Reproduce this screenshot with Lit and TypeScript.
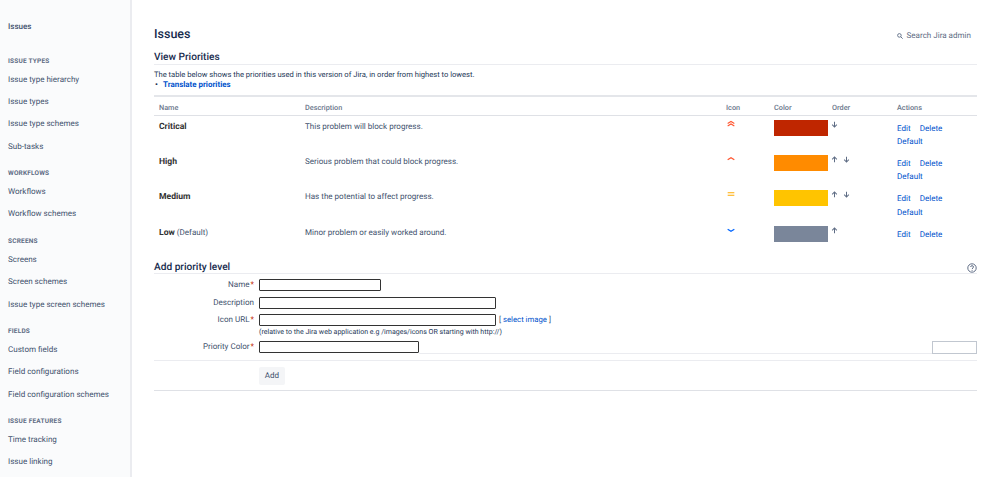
import { LitElement, html, css, svg } from "lit";
import { customElement } from "lit/decorators.js";

const NAV = [
  { t: "ISSUE TYPES", items: ["Issue type hierarchy", "Issue types", "Issue type schemes", "Sub-tasks"] },
  { t: "WORKFLOWS", items: ["Workflows", "Workflow schemes"] },
  { t: "SCREENS", items: ["Screens", "Screen schemes", "Issue type screen schemes"] },
  { t: "FIELDS", items: ["Custom fields", "Field configurations", "Field configuration schemes"] },
  { t: "ISSUE FEATURES", items: ["Time tracking", "Issue linking"] },
];

const ICONS: Record<string, unknown> = {
  critical: svg`<path d="M2 5.5 6 3l4 2.500M2 8.500 6 6l4 2.500" stroke="#ff5630" stroke-width="1.300" fill="none"/>`,
  high: svg`<path d="M2 7 6 4.500 10 7" stroke="#ff5630" stroke-width="1.500" fill="none"/>`,
  medium: svg`<path d="M2 4.500h8M2 7.500h8" stroke="#ffab00" stroke-width="1.400" fill="none"/>`,
  low: svg`<path d="M2 5 6 7.500 10 5" stroke="#0065ff" stroke-width="1.500" fill="none"/>`,
};

const ROWS = [
  { n: "Critical", d: "This problem will block progress.", i: "critical", c: "#bf2600", up: false, down: true, def: true, note: "" },
  { n: "High", d: "Serious problem that could block progress.", i: "high", c: "#ff8b00", up: true, down: true, def: true, note: "" },
  { n: "Medium", d: "Has the potential to affect progress.", i: "medium", c: "#ffc400", up: true, down: true, def: true, note: "" },
  { n: "Low", d: "Minor problem or easily worked around.", i: "low", c: "#7a869a", up: true, down: false, def: false, note: " (Default)" },
];

const arrow = (up: boolean) => html`<svg class="arrow" viewBox="0 0 9 9">
  <path d=${up ? "M4.500 8V1.500M1.500 4.300 4.500 1.300 7.500 4.300" : "M4.500 1v6.500M1.500 4.700 4.500 7.700 7.500 4.700"} stroke="#5e6c84" stroke-width="1.300" fill="none"/>
</svg>`;

@customElement("app-root")
export class AppRoot extends LitElement {
  static styles = css`
    :host {
      display: flex;
      width: 999px;
      height: 477px;
      overflow: hidden;
      background: #fff;
      font-family: Roboto, "Liberation Sans", sans-serif;
      font-size: 8.050px;
      color: #172b4d;
      text-rendering: geometricPrecision;
    }
    .side {
      width: 132px;
      height: 477px;
      flex: none;
      background: #fafbfc;
      border-right: 2px solid #ebecf0;
      padding: 22px 0 0 8px;
      box-sizing: border-box;
      color: #42526e;
    }
    .side-top { line-height: 10px; font-weight: 500; margin-bottom: 24.500px; }
    .grp { margin-bottom: 10.900px; }
    .grp-t {
      font-size: 6.500px;
      font-weight: 700;
      letter-spacing: 0.2px;
      color: #5e6c84;
      line-height: 9px;
      margin-bottom: 3.300px;
    }
    .it { height: 22.3px; line-height: 22.300px; }
    .main { flex: 1; padding: 27px 22px 0 22px; min-width: 0; position: relative; }
    h1 { margin: 0; font-size: 12.500px; font-weight: 500; line-height: 15px; color: #172b4d; }
    .search {
      position: absolute;
      right: 28px;
      top: 30px;
      display: flex;
      align-items: center;
      gap: 4px;
      color: #5e6c84;
      line-height: 11px;
    }
    h2 {
      margin: 0;
      font-size: 10.150px;
      font-weight: 500;
      line-height: 13px;
      color: #172b4d;
      border-bottom: 1px solid #ebecf0;
    }
    .v { margin-top: 8px; padding-top: 1.500px; line-height: 12.500px; }
    .intro { margin: 5px 0 0; line-height: 10px; font-size: 7.600px; color: #253858; }
    .tl { margin: 0; padding: 0 0 0 1px; line-height: 10px; font-size: 7.950px; font-weight: 700; color: #0052cc; display: flex; }
    .tl::before { content: "•"; width: 8px; color: #172b4d; }
    table { border-collapse: collapse; width: 100%; table-layout: fixed; margin-top: 5px; border-top: 2px solid #e4e6ea; }
    th {
      text-align: left;
      font-size: 7.300px;
      font-weight: 500;
      color: #6b778c;
      height: 19px;
      padding: 3px 0 0 5px;
      box-sizing: border-box;
      border-bottom: 1.500px solid #dfe1e6;
    }
    td { vertical-align: top; height: 35.6px; padding: 0 0 0 5px; color: #42526e; box-sizing: border-box; line-height: 10px; }
    td.pad { padding-top: 6px; }
    td b { font-weight: 700; color: #333; font-size: 8.600px; }
    .ic { display: block; margin-top: 3px; width: 10px; height: 10px; }
    .sw { display: block; height: 16px; margin-top: 4px; width: 54px; box-sizing: border-box; }
    .ord { display: flex; gap: 5px; padding-top: 5px; height: 8px; margin-left: -1px; }
    .arrow { width: 7px; height: 7px; }
    .act { color: #0052cc; line-height: 13.500px; padding-top: 6px; }
    .act span + span { margin-left: 9px; }
    .h-add { margin-top: 2px; padding-top: 3px; line-height: 11px; display: flex; justify-content: space-between; align-items: center; }
    .help { display: block; }
    .form-row { display: flex; align-items: flex-start; }
    .lab { width: 105px; padding: 1px 5px 0 0; box-sizing: border-box; flex: none; text-align: right; color: #42526e; line-height: 10px; }
    .lab em { color: #bf2600; font-style: normal; margin-left: 1px; }
    .fld { height: 10px; border: 1px solid #333; border-radius: 1px; display: block; background: #fff; box-sizing: content-box; }
    .rows { padding-top: 5px; display: flex; flex-direction: column; gap: 5.300px; }
    .second { display: flex; align-items: center; gap: 3px; color: #42526e; font-size: 7.750px; }
    .blue { color: #0052cc; }
    .hint { font-size: 7.040px; line-height: 9px; color: #253858; margin-top: 1px; }
    .col { display: flex; flex-direction: column; }
    .rule { flex: 1; align-self: flex-end; height: 1px; background: #ebecf0; }
    .picker { width: 43px; height: 11px; border: 1px solid #c1c7d0; background: #fff; }
    .actions { margin-top: 6px; border-top: 1px solid #ebecf0; border-bottom: 1px solid #dfe1e6; padding: 5.500px 0 5px 105px; }
    .btn {
      display: block;
      width: 26px;
      height: 18px;
      background: #f4f5f7;
      border-radius: 2px;
      color: #42526e;
      text-align: center;
      line-height: 18px;
    }
  `;

  render() {
    return html`
      <aside class="side">
        <div class="side-top">Issues</div>
        ${NAV.map(
          (g) => html`<div class="grp">
            <div class="grp-t">${g.t}</div>
            ${g.items.map((i) => html`<div class="it">${i}</div>`)}
          </div>`
        )}
      </aside>
      <main class="main">
        <h1>Issues</h1>
        <div class="search">
          <svg width="6" height="6" viewBox="0 0 8 8"><circle cx="3.200" cy="3.200" r="2.400" stroke="#5e6c84" stroke-width="1.200" fill="none"/><path d="M5 5l2.500 2.500" stroke="#5e6c84" stroke-width="1.300"/></svg>
          <span>Search Jira admin</span>
        </div>
        <h2 class="v">View Priorities</h2>
        <p class="intro">The table below shows the priorities used in this version of Jira, in order from highest to lowest.</p>
        <div class="tl">Translate priorities</div>
        <table>
          <colgroup>
            <col style="width:146px" /><col style="width:421px" /><col style="width:48px" /><col style="width:58px" /><col style="width:65px" /><col />
          </colgroup>
          <thead>
            <tr><th>Name</th><th>Description</th><th>Icon</th><th>Color</th><th>Order</th><th>Actions</th></tr>
          </thead>
          <tbody>
            ${ROWS.map(
              (r) => html`<tr>
                <td class="pad"><b>${r.n}</b>${r.note}</td>
                <td class="pad">${r.d}</td>
                <td><svg class="ic" viewBox="0 0 12 12">${ICONS[r.i]}</svg></td>
                <td><span class="sw" style="background:${r.c}"></span></td>
                <td><div class="ord">${r.up ? arrow(true) : ""}${r.down ? arrow(false) : ""}</div></td>
                <td class="act"><span>Edit</span><span>Delete</span>${r.def ? html`<div>Default</div>` : ""}</td>
              </tr>`
            )}
          </tbody>
        </table>
        <h2 class="h-add">
          <span>Add priority level</span>
          <svg class="help" width="10" height="10" viewBox="0 0 10 10"><circle cx="5" cy="5" r="4.200" stroke="#505f79" stroke-width=".9" fill="none"/><path d="M3.600 4c0-1.800 2.900-1.800 2.900 0 0 1-1.400 1-1.400 2.100M5.100 7v.8" stroke="#505f79" stroke-width=".9" fill="none"/></svg>
        </h2>
        <div class="rows">
          <div class="form-row"><div class="lab">Name<em>*</em></div><span class="fld" style="width:120px"></span></div>
          <div class="form-row"><div class="lab">Description</div><span class="fld" style="width:235px"></span></div>
          <div class="form-row">
            <div class="lab">Icon URL<em>*</em></div>
            <div class="col">
              <div class="second"><span class="fld" style="width:235px"></span><span>[ <span class="blue">select image</span> ]</span></div>
              <div class="hint">(relative to the Jira web application e.g /images/icons OR starting with http://)</div>
            </div>
          </div>
          <div class="form-row"><div class="lab">Priority Color<em>*</em></div><span class="fld" style="width:158px"></span><span class="rule"></span><span class="picker"></span></div>
        </div>
        <div class="actions"><span class="btn">Add</span></div>
      </main>
    `;
  }
}
